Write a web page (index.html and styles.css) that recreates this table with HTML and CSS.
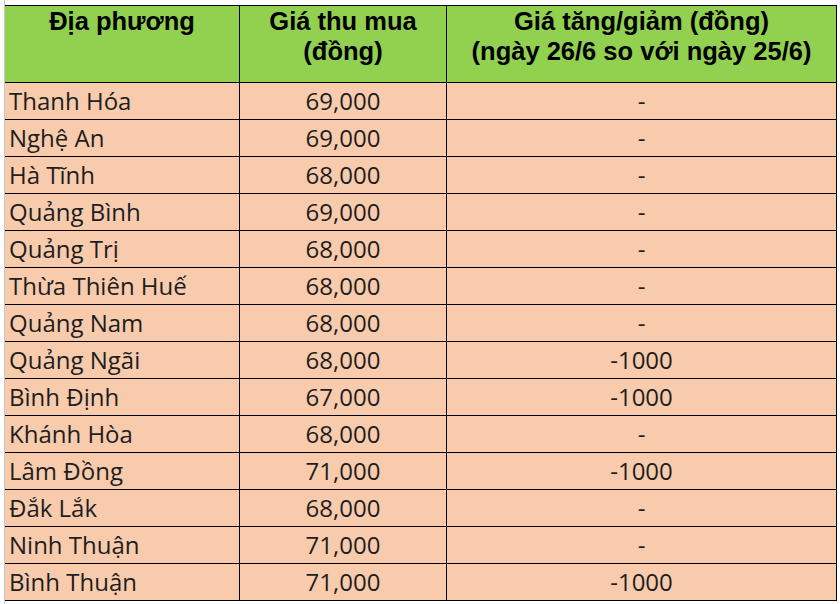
FILE: index.html
```html
<!DOCTYPE html>
<html lang="vi">
<head>
<meta charset="utf-8">
<title>Giá thu mua</title>
<link rel="stylesheet" href="styles.css">
</head>
<body>
<div class="sheet">
  <div class="grid">
    <div class="hd">Địa phương</div>
    <div class="hd">Giá thu mua<br>(đồng)</div>
    <div class="hd">Giá tăng/giảm (đồng)<br>(ngày 26/6 so với ngày 25/6)</div>

    <div class="c name">Thanh Hóa</div><div class="c num">69,000</div><div class="c num">-</div>
    <div class="c name">Nghệ An</div><div class="c num">69,000</div><div class="c num">-</div>
    <div class="c name">Hà Tĩnh</div><div class="c num">68,000</div><div class="c num">-</div>
    <div class="c name">Quảng Bình</div><div class="c num">69,000</div><div class="c num">-</div>
    <div class="c name">Quảng Trị</div><div class="c num">68,000</div><div class="c num">-</div>
    <div class="c name">Thừa Thiên Huế</div><div class="c num">68,000</div><div class="c num">-</div>
    <div class="c name">Quảng Nam</div><div class="c num">68,000</div><div class="c num">-</div>
    <div class="c name">Quảng Ngãi</div><div class="c num">68,000</div><div class="c num">-1000</div>
    <div class="c name">Bình Định</div><div class="c num">67,000</div><div class="c num">-1000</div>
    <div class="c name">Khánh Hòa</div><div class="c num">68,000</div><div class="c num">-</div>
    <div class="c name">Lâm Đồng</div><div class="c num">71,000</div><div class="c num">-1000</div>
    <div class="c name">Đắk Lắk</div><div class="c num">68,000</div><div class="c num">-</div>
    <div class="c name">Ninh Thuận</div><div class="c num">71,000</div><div class="c num">-</div>
    <div class="c name">Bình Thuận</div><div class="c num">71,000</div><div class="c num">-1000</div>
  </div>
</div>
</body>
</html>
```
FILE: styles.css
```css
html, body {
  margin: 0;
  padding: 0;
  background: #ffffff;
}
.sheet {
  margin-left: 4px;
  border-left: 1px solid #c6c6c6;
  height: 604px;
  box-sizing: border-box;
  padding-top: 5px;
}
.grid {
  display: grid;
  grid-template-columns: 234px 206px 389px;
  grid-template-rows: 76px repeat(14, 36px);
  gap: 1px;
  background: #000000;
  padding: 1px 1px 1px 0;
  width: max-content;
}
.hd {
  background: #92d050;
  font-family: "Liberation Sans", Arial, sans-serif;
  font-weight: bold;
  font-size: 25.5px;
  line-height: 30px;
  text-align: center;
  color: #000000;
  white-space: nowrap;
}
.c {
  background: #f8cbad;
  font-family: "Open Sans", "Noto Sans", sans-serif;
  font-size: 24px;
  color: #1e1e1e;
  display: flex;
  align-items: center;
  white-space: nowrap;
  padding-bottom: 2px;
  box-sizing: border-box;
}
.name {
  padding-left: 4px;
}
.num {
  justify-content: center;
}
```
